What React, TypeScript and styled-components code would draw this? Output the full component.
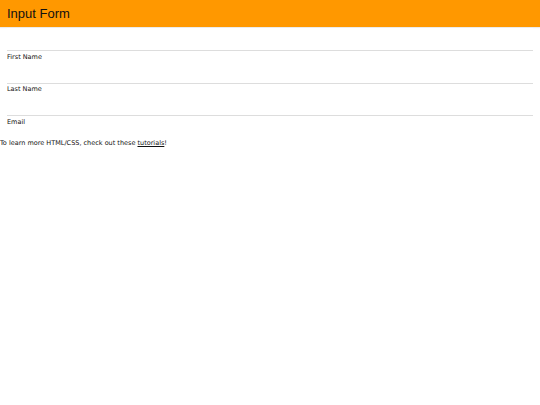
import styled, { createGlobalStyle } from 'styled-components'

const GlobalStyle = createGlobalStyle`
  html, body {
    margin: 0;
    padding: 0;
    background: #fff;
  }
  body {
    font-family: "DejaVu Sans", Verdana, sans-serif;
    color: #000;
  }
`

const Header = styled.header`
  height: 27px;
  display: flex;
  align-items: center;
  padding: 0 7px;
  background: #ff9800;
  box-shadow: 0 1px 1px rgba(0, 0, 0, 0.08);
`

const Title = styled.h1`
  margin: 0;
  font-family: "Liberation Sans", Arial, sans-serif;
  font-weight: normal;
  font-size: 13px;
  color: #111;
`

const Form = styled.form`
  padding: 1px 7px 0;
  display: flex;
  flex-direction: column;
`

const Field = styled.div`
  display: flex;
  flex-direction: column;
`

const Input = styled.input`
  display: block;
  box-sizing: border-box;
  width: 100%;
  height: 23px;
  padding: 4px;
  border: none;
  border-bottom: 1px solid #ddd;
  font-size: 7px;
  outline: none;
`

const Label = styled.label`
  display: block;
  box-sizing: border-box;
  height: 9.5px;
  padding-top: 1.5px;
  font-size: 6.5px;
  line-height: 8px;
  color: #111;
`

const Note = styled.p`
  margin: 13px 0 0;
  font-size: 6.5px;
  line-height: 9px;
  color: #111;

  a {
    color: inherit;
    text-decoration: underline;
  }
`

const fields = ['First Name', 'Last Name', 'Email']

export default function App() {
  return (
    <>
      <GlobalStyle />
      <Header>
        <Title>Input Form</Title>
      </Header>
      <Form>
        {fields.map((name) => (
          <Field key={name}>
            <Input type="text" />
            <Label>{name}</Label>
          </Field>
        ))}
      </Form>
      <Note>
        To learn more HTML/CSS, check out these <a href="#">tutorials</a>!
      </Note>
    </>
  )
}
